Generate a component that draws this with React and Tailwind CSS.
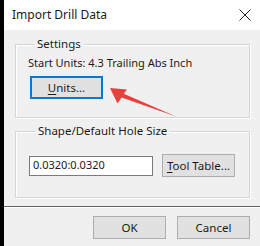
import React from 'react';

const font = { fontFamily: '"Noto Sans", "Open Sans", sans-serif' };

function WinButton({ children, focused = false, className = '' }) {
  return (
    <button
      className={`h-[23px] w-[73px] bg-[#e1e1e1] text-[11.5px] leading-none text-[#1a1a1a] ${
        focused ? 'border-2 border-[#0078d7]' : 'border border-[#adadad]'
      } ${className}`}
    >
      {children}
    </button>
  );
}

function GroupBox({ label, children, className = '' }) {
  return (
    <fieldset className={`border border-[#d5d5d5] shadow-[inset_1px_1px_0_#ffffff,1px_1px_0_#ffffff] ${className}`}>
      <legend className="ml-[6px] px-[3px] text-[11.5px] leading-[14px] text-[#1a1a1a]">{label}</legend>
      {children}
    </fieldset>
  );
}

export default function App() {
  return (
    <div className="relative w-[260px] h-[246px] flex bg-black" style={font}>
      <div className="ml-[4px] flex-1 flex flex-col bg-[#f0f0f0]">
        {/* Title bar */}
        <div className="h-[30px] bg-white flex items-center justify-between pl-[8px] pr-[9px]">
          <span className="text-[12px] text-[#1a1a1a]">Import Drill Data</span>
          <svg width="12" height="12" viewBox="0 0 12 12">
            <path d="M0.5 0.5 L11.5 11.5 M11.5 0.5 L0.5 11.5" stroke="#222" strokeWidth="1" fill="none" />
          </svg>
        </div>

        {/* Settings */}
        <GroupBox label="Settings" className="mt-[7px] ml-[11px] w-[235px] pl-[12px] pb-[18px]">
          <div className="mt-[4px] text-[11px] leading-[16px] text-[#1a1a1a]">
            Start Units: 4.3 Trailing Abs Inch
          </div>
          <WinButton focused className="mt-[5px] ml-[2px] w-[72px] h-[22px]">
            <u className="underline-offset-2">U</u>nits...
          </WinButton>
        </GroupBox>

        {/* Shape / Default Hole Size */}
        <GroupBox label="Shape/Default Hole Size" className="mt-[6px] ml-[11px] w-[235px] pl-[13px] pb-[20px]">
          <div className="mt-[16px] flex items-center">
            <div className="h-[20px] w-[124px] bg-white border border-[#7a7a7a] flex items-center px-[3px] text-[11px] text-[#1a1a1a]">
              0.0320:0.0320
            </div>
            <WinButton className="ml-[9px]">
              <u className="underline-offset-2">T</u>ool Table...
            </WinButton>
          </div>
        </GroupBox>

        {/* Bottom buttons */}
        <div className="mt-[8px] border-t border-[#646464] shadow-[inset_0_1px_0_#ffffff] flex-1 flex justify-end items-start gap-[11px] pt-[9px] pr-[10px]">
          <WinButton className="w-[72px]">OK</WinButton>
          <WinButton className="w-[72px]">Cancel</WinButton>
        </div>
      </div>

      {/* Red annotation arrow */}
      <svg className="absolute left-0 top-0 pointer-events-none" width="260" height="246">
        <polygon
          points="110,88 127,89.5 123.8,93.8 176,116.6 121.6,97.6 117.5,103.5"
          fill="#e8403c"
        />
      </svg>
    </div>
  );
}
